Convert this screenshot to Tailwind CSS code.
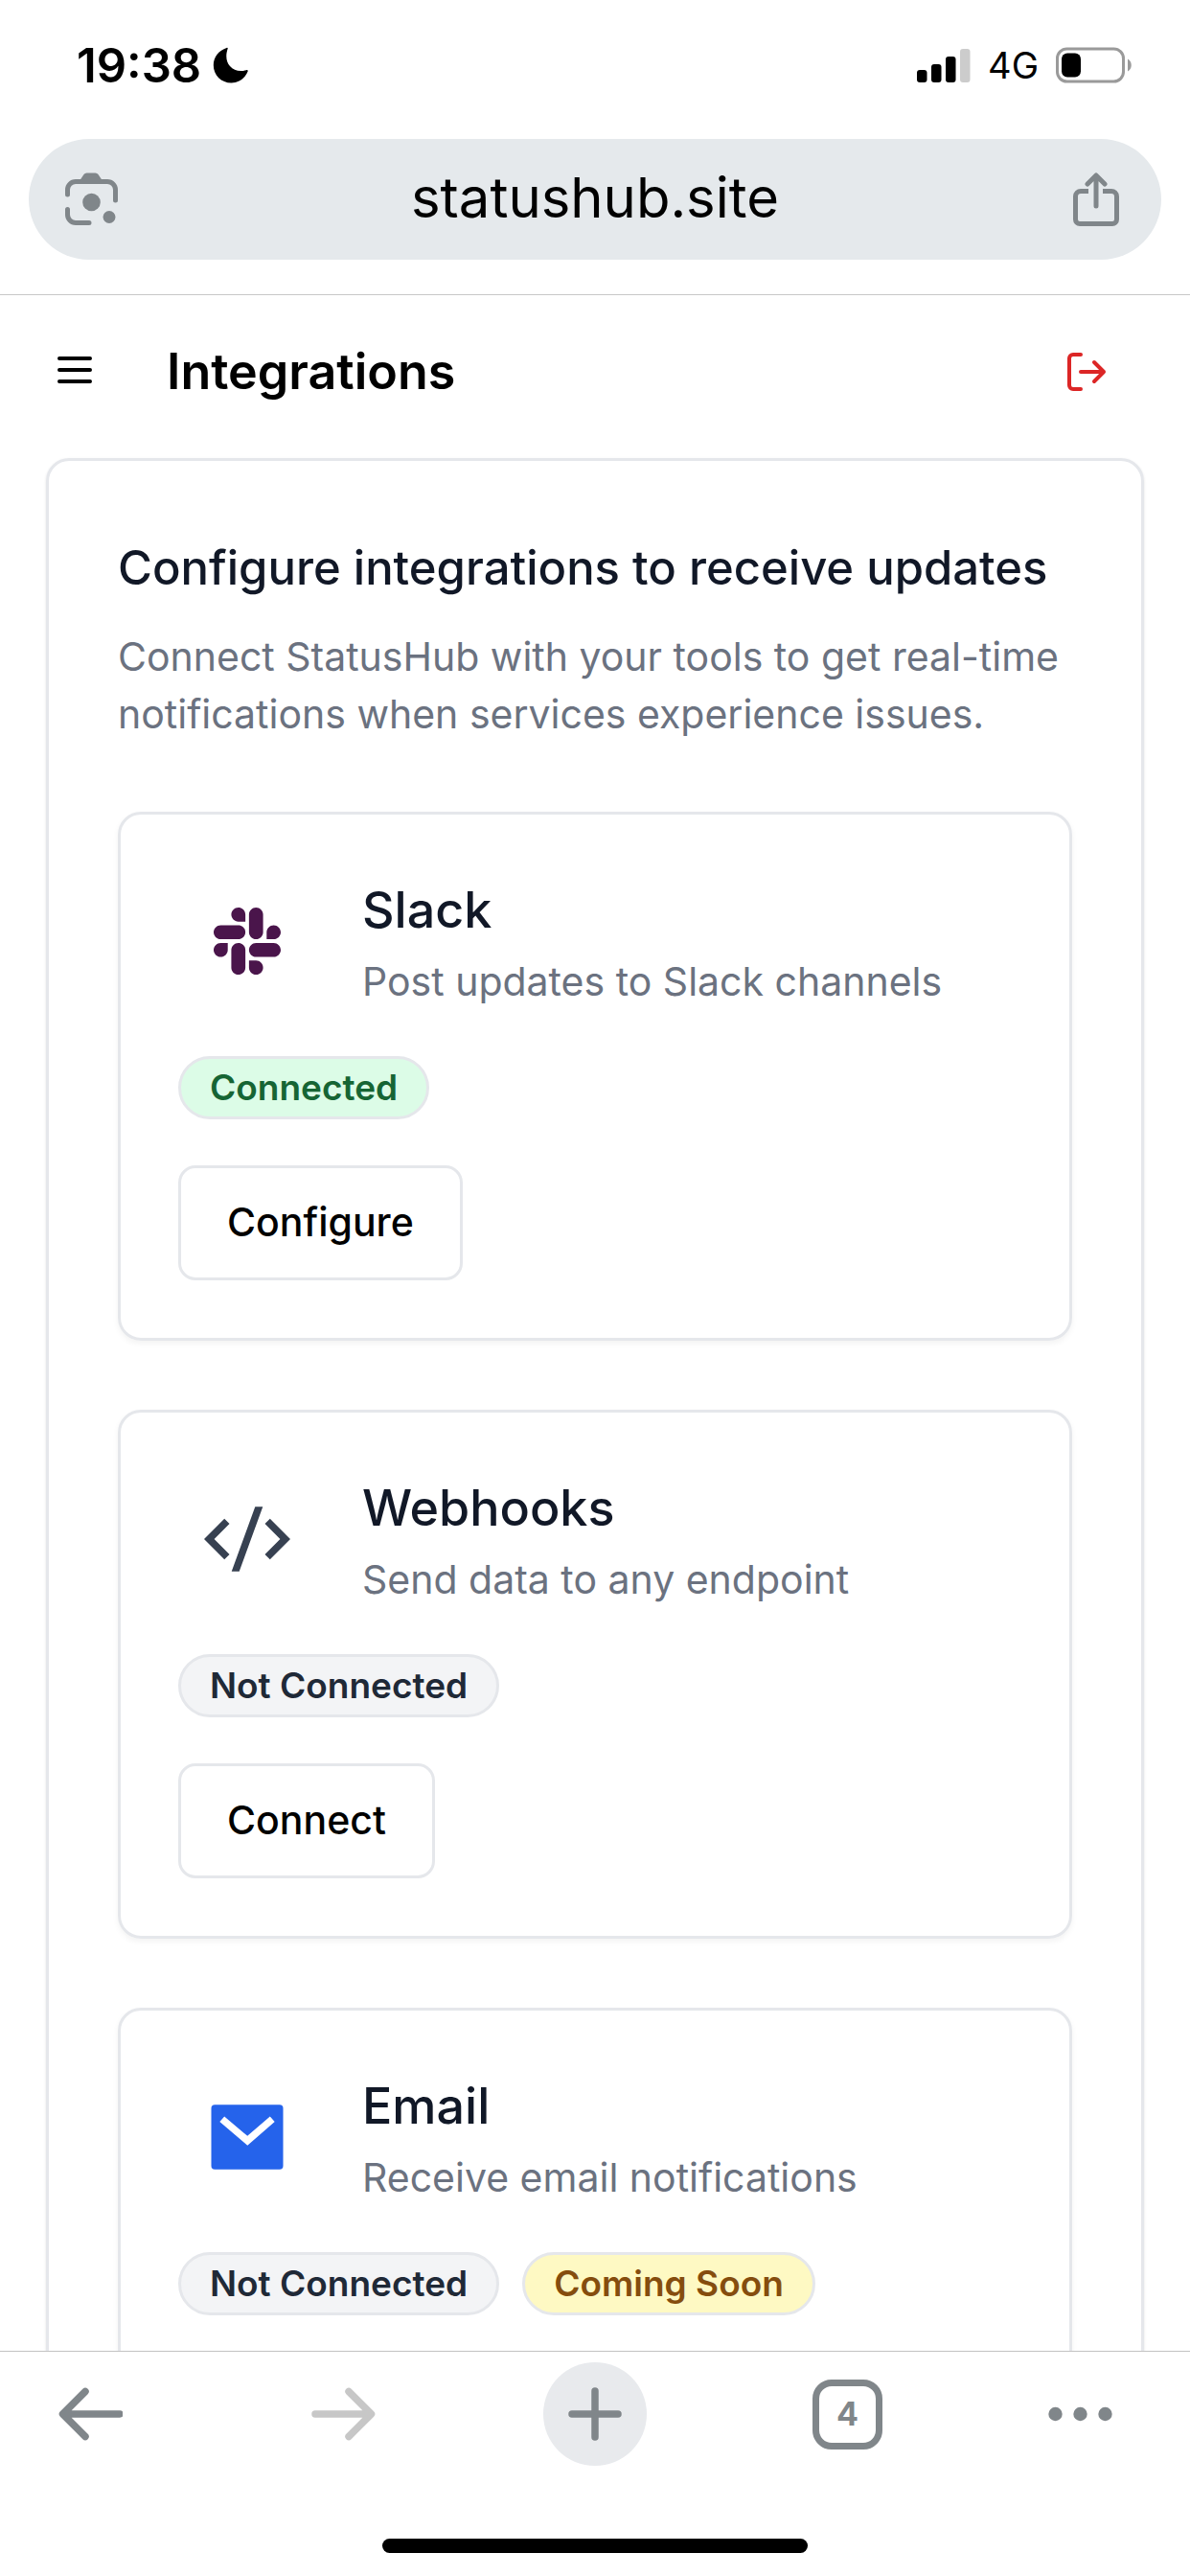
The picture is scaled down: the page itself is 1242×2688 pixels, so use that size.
<!DOCTYPE html>
<html lang="en">

<head>
    <meta charset="UTF-8" />
    <meta name="viewport" content="width=device-width, initial-scale=1.0" />
    <title>Integrations - StatusHub</title>
    <script src="https://cdn.jsdelivr.net/npm/@tailwindcss/browser@4"></script>
</head>

<body class="flex h-screen flex-col overflow-hidden bg-white font-['Inter','Liberation_Sans',sans-serif] text-black">

    <!-- Status bar -->
    <div class="flex h-[136px] shrink-0 items-center justify-between pl-20 pr-[60px]">
        <div class="flex items-center gap-3">
            <span class="text-[49px] leading-none font-semibold">19:38</span>
            <svg class="h-[38px] w-[38px]" viewBox="0 0 38 38" aria-hidden="true">
                <path d="M14.5 1C15.4.6 16 1 15.6 2 13 10 14.5 16 18 20c4 4.6 10 6 17 4.2 1.4-.4 2 .2 1.6 1.3C33.5 33 27 37.5 19.5 37.5 9 37.5.8 29.5.8 19 .8 10.5 6.500 3.5 14.5 1z" />
            </svg>
        </div>
        <div class="flex items-center gap-[18px]">
            <svg class="h-9 w-[56px]" viewBox="0 0 56 36" aria-hidden="true">
                <rect x="0" y="23" width="10.5" height="13" rx="3" />
                <rect x="15" y="17" width="10.5" height="19" rx="3" />
                <rect x="30" y="9" width="10.5" height="27" rx="3" />
                <rect x="45" y="1" width="10.5" height="35" rx="3" fill="#cccccc" />
            </svg>
            <span class="text-[38px] leading-none">4G</span>
            <svg class="h-[38px] w-[80px]" viewBox="0 0 80 38" aria-hidden="true">
                <rect x="1.5" y="2" width="69" height="34" rx="10" fill="none" stroke="#9a9a9a" stroke-width="3" />
                <rect x="6" y="6.5" width="20" height="25" rx="6" />
                <path d="M75 12.5c5 2.5 5 10.5 0 13z" fill="#9a9a9a" />
            </svg>
        </div>
    </div>

    <!-- Address bar -->
    <div class="shrink-0 border-b border-[#c8c8c8] px-[30px] pt-[9px] pb-9">
        <div class="flex h-[126px] items-center rounded-full bg-[#e5e9ec] px-[38px]">
            <button aria-label="Search with camera">
                <svg class="h-14 w-14" viewBox="0 0 56 56" fill="#80868a" aria-hidden="true">
                    <path d="M15.5 8 19.500 2q1-1.500 3-1.500h9q2 0 3 1.500l4 6z" />
                    <g fill="none" stroke="#80868a" stroke-width="5" stroke-linecap="round">
                        <path d="M2.500 23v-5a8.500 8.500 0 0 1 8.500-8.500h33a8.500 8.500 0 0 1 8.500 8.500v11" />
                        <path d="M2.500 38.500v5.500a8.500 8.500 0 0 0 8.500 8.500h14" />
                    </g>
                    <circle cx="27.5" cy="31" r="9.3" />
                    <circle cx="46" cy="46.5" r="6.5" />
                </svg>
            </button>
            <input type="text" aria-label="Address" value="statushub.site" class="min-w-0 flex-1 bg-transparent pb-1 text-center text-[58px] outline-none" />
            <button aria-label="Share">
                <svg class="h-14 w-14" viewBox="0 0 56 56" fill="none" stroke="#80868a" stroke-width="5" stroke-linecap="round" stroke-linejoin="round" aria-hidden="true">
                    <path stroke-linecap="butt" d="M18 19.500h-8A5.500 5.500 0 0 0 4.500 25v24a4.500 4.500 0 0 0 4.500 4.500h34a4.500 4.500 0 0 0 4.500-4.500V25a5.500 5.500 0 0 0-5.500-5.500h-9" />
                    <path d="M26 35V4M17 12l9-9 9 9" />
                </svg>
            </button>
        </div>
    </div>

    <main class="min-h-0 flex-1 overflow-hidden">
        <header class="flex h-40 items-center gap-[72px] pl-[54px] pr-[84px]">
            <button aria-label="Open menu">
                <svg class="h-12 w-12" viewBox="0 0 24 24" fill="none" stroke="currentColor" stroke-width="2" stroke-linecap="round" aria-hidden="true">
                    <path d="M4 5h16M4 11h16M4 17h16" />
                </svg>
            </button>
            <h1 class="flex-1 text-[52px] leading-[60px] font-semibold">Integrations</h1>
            <button aria-label="Log out" class="text-[#dc2626]">
                <svg class="h-12 w-12" viewBox="0 0 24 24" fill="none" stroke="currentColor" stroke-width="2" stroke-linecap="round" stroke-linejoin="round" aria-hidden="true">
                    <path d="M9 21H5a2 2 0 0 1-2-2V5a2 2 0 0 1 2-2h4M16 17l5-5-5-5M21 12H9" />
                </svg>
            </button>
        </header>

        <section class="mx-12 mt-2.5 rounded-3xl border-[3px] border-[#e5e7eb] p-[72px] shadow-sm">
            <h2 class="text-[49px] leading-[80px] font-medium whitespace-nowrap text-[#111827]">Configure integrations to receive updates</h2>
            <p class="mt-[22px] text-[41px] leading-[60px] text-[#6b7280]">Connect StatusHub with your tools to get real-time notifications when services experience issues.</p>

            <div class="mt-[72px] flex flex-col gap-[72px]">
                <!-- Slack -->
                <article class="flex flex-col items-start gap-12 rounded-3xl border-[3px] border-[#e5e7eb] p-[60px] shadow-[0_3px_6px_rgba(0,0,0,0.05)]">
                    <div class="flex items-center gap-12">
                        <div class="flex h-36 w-36 items-center justify-center">
                            <svg class="h-[70px] w-[70px]" viewBox="0 32 448 448" fill="#4a154b" aria-hidden="true">
                                <path d="M94.12 315.1c0 25.9-21.16 47.06-47.06 47.06S0 341 0 315.1c0-25.9 21.16-47.06 47.06-47.06h47.06v47.06zm23.72 0c0-25.9 21.16-47.06 47.06-47.06s47.06 21.16 47.06 47.06v117.84c0 25.9-21.16 47.06-47.06 47.06s-47.06-21.16-47.06-47.06V315.1zm47.06-188.98c-25.9 0-47.06-21.16-47.06-47.06S139 32 164.9 32s47.06 21.16 47.06 47.06v47.06H164.9zm0 23.72c25.9 0 47.06 21.16 47.06 47.06s-21.16 47.06-47.06 47.06H47.06C21.16 243.96 0 222.8 0 196.9s21.16-47.06 47.06-47.06H164.9zm188.98 47.06c0-25.9 21.16-47.06 47.06-47.06 25.9 0 47.06 21.16 47.06 47.06s-21.16 47.06-47.06 47.06h-47.06V196.9zm-23.72 0c0 25.9-21.16 47.06-47.06 47.06-25.9 0-47.06-21.16-47.06-47.06V79.06c0-25.9 21.16-47.06 47.06-47.06 25.9 0 47.06 21.16 47.06 47.06V196.9zM283.1 385.88c25.9 0 47.06 21.16 47.06 47.06 0 25.9-21.16 47.06-47.06 47.06-25.9 0-47.06-21.16-47.06-47.06v-47.06h47.06zm0-23.72c-25.9 0-47.06-21.16-47.06-47.06 0-25.9 21.16-47.06 47.06-47.06h117.84c25.9 0 47.06 21.16 47.06 47.06 0 25.9-21.16 47.06-47.06 47.06H283.1z" />
                            </svg>
                        </div>
                        <div>
                            <h3 class="text-[52px] leading-[80px] font-medium text-[#111827]">Slack</h3>
                            <p class="mt-1 text-[41px] leading-[60px] text-[#6b7280]">Post updates to Slack channels</p>
                        </div>
                    </div>
                    <span class="rounded-full border-[3px] border-[#e5e7eb] bg-[#dcfce7] px-[30px] py-1.5 text-[37px] leading-[48px] font-semibold text-[#166534]">Connected</span>
                    <button class="h-[120px] rounded-[18px] border-[3px] border-[#e5e7eb] px-12 text-[41px] font-medium">Configure</button>
                </article>

                <!-- Webhooks -->
                <article class="flex flex-col items-start gap-12 rounded-3xl border-[3px] border-[#e5e7eb] p-[60px] shadow-[0_3px_6px_rgba(0,0,0,0.05)]">
                    <div class="flex items-center gap-12">
                        <div class="flex h-36 w-36 items-center justify-center">
                            <svg class="h-[90px] w-[90px]" viewBox="0 0 24 24" fill="#374151" aria-hidden="true">
                                <path d="M24 12l-5.657 5.657-1.414-1.414L21.172 12l-4.243-4.243 1.414-1.414L24 12zM2.828 12l4.243 4.243-1.414 1.414L0 12l5.657-5.657L7.07 7.757 2.828 12zm6.96 9H7.66l6.552-18h2.128L9.788 21z" />
                            </svg>
                        </div>
                        <div>
                            <h3 class="text-[52px] leading-[80px] font-medium text-[#111827]">Webhooks</h3>
                            <p class="mt-1 text-[41px] leading-[60px] text-[#6b7280]">Send data to any endpoint</p>
                        </div>
                    </div>
                    <span class="rounded-full border-[3px] border-[#e5e7eb] bg-[#f3f4f6] px-[30px] py-1.5 text-[37px] leading-[48px] font-semibold text-[#1f2937]">Not Connected</span>
                    <button class="h-[120px] rounded-[18px] border-[3px] border-[#e5e7eb] px-12 text-[41px] font-medium">Connect</button>
                </article>

                <!-- Email -->
                <article class="flex flex-col items-start gap-12 rounded-3xl border-[3px] border-[#e5e7eb] p-[60px] shadow-[0_3px_6px_rgba(0,0,0,0.05)]">
                    <div class="flex items-center gap-12">
                        <div class="flex h-36 w-36 items-center justify-center">
                            <svg class="h-[90px] w-[90px]" viewBox="0 0 24 24" fill="#2563eb" aria-hidden="true">
                                <path d="M3 3h18a1 1 0 0 1 1 1v16a1 1 0 0 1-1 1H3a1 1 0 0 1-1-1V4a1 1 0 0 1 1-1zm9.06 8.683L5.648 6.238 4.353 7.762l7.72 6.555 7.581-6.56-1.308-1.513-6.285 5.439z" />
                            </svg>
                        </div>
                        <div>
                            <h3 class="text-[52px] leading-[80px] font-medium text-[#111827]">Email</h3>
                            <p class="mt-1 text-[41px] leading-[60px] text-[#6b7280]">Receive email notifications</p>
                        </div>
                    </div>
                    <div class="flex gap-6">
                        <span class="rounded-full border-[3px] border-[#e5e7eb] bg-[#f3f4f6] px-[30px] py-1.5 text-[37px] leading-[48px] font-semibold text-[#1f2937]">Not Connected</span>
                        <span class="rounded-full border-[3px] border-[#e5e7eb] bg-[#fef9c3] px-[30px] py-1.5 text-[37px] leading-[48px] font-semibold text-[#854d0e]">Coming Soon</span>
                    </div>
                </article>
            </div>
        </section>
    </main>

    <!-- Browser toolbar -->
    <footer class="flex h-[235px] shrink-0 flex-col items-center justify-between border-t border-[#c3c3c3] pt-[11px] pb-6">
        <nav class="flex w-full items-center justify-between px-10 text-[#80868a]">
            <button aria-label="Back" class="flex h-[108px] w-[108px] items-center justify-center">
                <svg class="h-[68px] w-[68px]" viewBox="0 0 68 68" fill="none" stroke="currentColor" stroke-width="7.5" stroke-linecap="round" stroke-linejoin="round" aria-hidden="true">
                    <path d="M65 34H7M29 10.5 5.5 34 29 57.5" />
                </svg>
            </button>
            <button aria-label="Forward" class="flex h-[108px] w-[108px] items-center justify-center text-[#c7c7c7]">
                <svg class="h-[68px] w-[68px]" viewBox="0 0 68 68" fill="none" stroke="currentColor" stroke-width="7.5" stroke-linecap="round" stroke-linejoin="round" aria-hidden="true">
                    <path d="M5 34h58M40 10.5 63.5 34 40 57.5" />
                </svg>
            </button>
            <button aria-label="New tab" class="flex h-[108px] w-[108px] items-center justify-center rounded-full bg-[#e8eaed]">
                <svg class="h-14 w-14" viewBox="0 0 56 56" fill="none" stroke="currentColor" stroke-width="7.5" stroke-linecap="round" aria-hidden="true">
                    <path d="M28 4v48M4 28h48" />
                </svg>
            </button>
            <button aria-label="Tabs" class="flex h-[108px] w-[108px] items-center justify-center">
                <span class="flex h-[73px] w-[73px] items-center justify-center rounded-[20px] border-[7px] border-[#80868a] text-[34px] leading-none font-bold">4</span>
            </button>
            <button aria-label="More" class="flex h-[108px] w-[108px] items-center">
                <svg class="h-4 w-[68px]" viewBox="0 0 68 16" fill="currentColor" aria-hidden="true">
                    <circle cx="7.5" cy="8" r="7.2" />
                    <circle cx="33.5" cy="8" r="7.2" />
                    <circle cx="59.5" cy="8" r="7.2" />
                </svg>
            </button>
        </nav>
        <div class="h-[15px] w-[444px] rounded-full bg-black"></div>
    </footer>
</body>

</html>
